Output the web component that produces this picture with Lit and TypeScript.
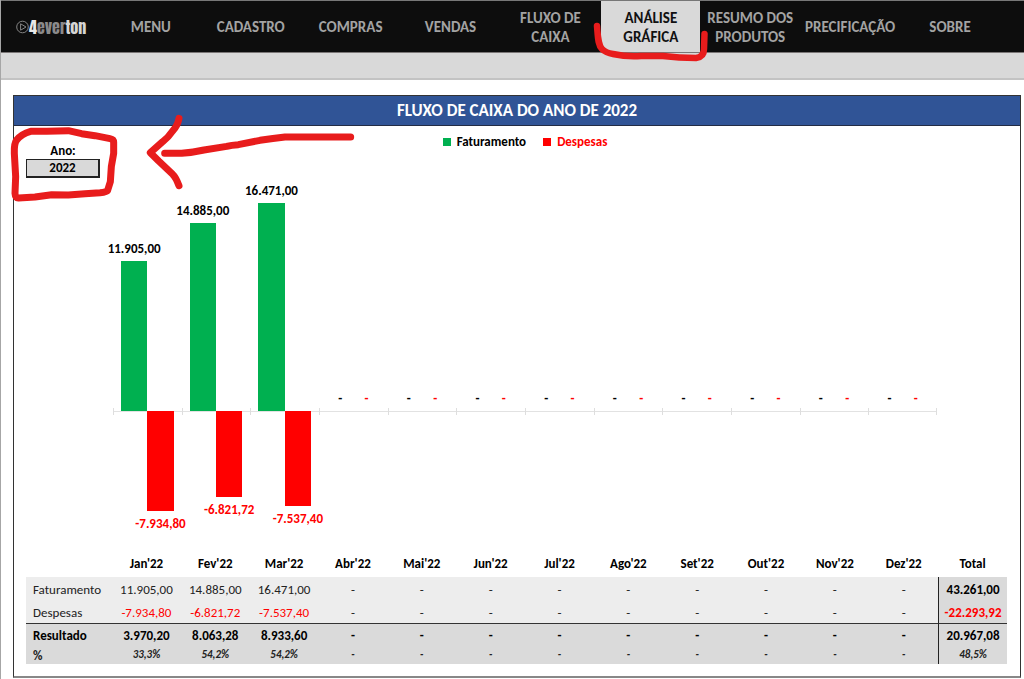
import { LitElement, html, css } from "lit";
import { customElement, property, state } from "lit/decorators.js";
import { classMap } from "lit/directives/class-map.js";
import { styleMap } from "lit/directives/style-map.js";

interface Month {
  name: string;
  income: number;
  expense: number;
}

const MONTHS: Month[] = [
  { name: "Jan", income: 11905, expense: -7934.8 },
  { name: "Fev", income: 14885, expense: -6821.72 },
  { name: "Mar", income: 16471, expense: -7537.4 },
  ...["Abr", "Mai", "Jun", "Jul", "Ago", "Set", "Out", "Nov", "Dez"].map(
    (name) => ({ name, income: 0, expense: 0 })
  ),
];

const PIXELS_PER_UNIT = 0.0126;

const money = (value: number): string => {
  if (!value) return "-";
  const [whole, cents] = Math.abs(value).toFixed(2).split(".");
  const grouped = whole.replace(/\B(?=(\d{3})+$)/g, ".");
  return `${value < 0 ? "-" : ""}${grouped},${cents}`;
};

const percent = (part: number, total: number): string =>
  total ? `${((part / total) * 100).toFixed(1).replace(".", ",")}%` : "-";

@customElement("nav-bar")
class NavBar extends LitElement {
  static styles = css`
    :host {
      display: block;
    }
    .bar {
      display: grid;
      grid-template-columns: repeat(10, minmax(0, 1fr));
      height: 51px;
      padding-right: 24px;
      background: #0d0d0d;
      border-top: 1px solid #777;
      border-bottom: 1px solid #7b7777;
    }
    .item {
      position: relative;
      display: flex;
      align-items: center;
      justify-content: center;
      padding-top: 2px;
      color: #a3a3a3;
      font-size: 15px;
      font-weight: 700;
      line-height: 19px;
      text-align: center;
      text-decoration: none;
      white-space: pre;
    }
    .active {
      margin-left: 1px;
      background: #d9d9d9;
      color: #111;
    }
    .logo {
      display: flex;
      align-items: center;
      padding-left: 15px;
      color: #8a8a8a;
      font: 400 16px "Anton", "Liberation Sans Narrow", "Roboto Condensed",
        "DejaVu Sans Condensed", sans-serif;
      text-decoration: none;
    }
    .play {
      width: 13px;
      height: 14px;
      flex: none;
    }
    .four {
      color: #e8e8e8;
    }
    .ton {
      color: #d5d5d5;
    }
    .mark {
      position: absolute;
      left: -12px;
      top: 14px;
      width: 124px;
      height: 52px;
      overflow: visible;
      pointer-events: none;
      z-index: 2;
    }
  `;

  private items = [
    "MENU",
    "CADASTRO",
    "COMPRAS",
    "VENDAS",
    "FLUXO DE\nCAIXA",
    "ANÁLISE\nGRÁFICA",
    "RESUMO DOS\nPRODUTOS",
    "PRECIFICAÇÃO",
    "SOBRE",
  ];

  @property() current = "ANÁLISE\nGRÁFICA";

  render() {
    return html`<nav class="bar">
      <a class="logo" href="#">
        <svg class="play" viewBox="0 0 13 14" fill="none" stroke="#858585">
          <circle cx="6.5" cy="7" r="5.8" />
          <path d="M4.6 3.8 10 7 4.6 10.2z" stroke-linejoin="round" />
        </svg>
        <span><span class="four">4</span>ever<span class="ton">ton</span></span>
      </a>
      ${this.items.map((label) => {
        const active = label === this.current;
        return html`<a class=${classMap({ item: true, active })} href="#"
          >${label}${active
            ? html`<svg class="mark" viewBox="0 0 124 52">
                <path
                  d="M8 11C9 23 9 30 13 34Q17 38 24 39Q38 42 52 41L74 41Q90 43 107 43Q115 42 115 34L115.500 19"
                  fill="none"
                  stroke="#e81c1c"
                  stroke-width="6.500"
                  stroke-linecap="round"
                  stroke-linejoin="round"
                />
              </svg>`
            : ""}</a
        >`;
      })}
    </nav>`;
  }
}

@customElement("cash-chart")
class CashChart extends LitElement {
  static styles = css`
    :host {
      display: block;
    }
    .plot {
      display: grid;
      grid-template-columns: repeat(12, minmax(0, 1fr));
      padding: 0 83px 0 99px;
    }
    .month {
      display: grid;
      grid-template-columns: 1fr 1fr;
      grid-template-rows: 230px 141px;
      padding: 0 8px;
      background:
        linear-gradient(#dedede, #dedede) 0 227px / 1px 7px no-repeat,
        linear-gradient(#e2e2e2, #e2e2e2) 0 230px / 100% 1px no-repeat;
    }
    .month:last-child {
      background:
        linear-gradient(#dedede, #dedede) 0 227px / 1px 7px no-repeat,
        linear-gradient(#dedede, #dedede) 100% 227px / 1px 7px no-repeat,
        linear-gradient(#e2e2e2, #e2e2e2) 0 230px / 100% 1px no-repeat;
    }
    .slot {
      display: flex;
      flex-direction: column;
      align-items: center;
      min-width: 0;
      font-size: 13px;
      font-weight: 700;
      line-height: 16px;
      white-space: nowrap;
      gap: 4px;
    }
    .up {
      grid-row: 1;
      justify-content: flex-end;
    }
    .down {
      grid-row: 2;
      grid-column: 2;
      justify-content: flex-start;
      gap: 5px;
    }
    .bar {
      width: 100%;
      flex: none;
    }
    .income {
      background: #00b050;
    }
    .expense {
      background: #f00;
    }
    .red {
      color: #f00;
    }
  `;

  @property({ attribute: false }) months: Month[] = [];

  private size(value: number) {
    return styleMap({ height: `${Math.round(Math.abs(value) * PIXELS_PER_UNIT)}px` });
  }

  render() {
    return html`<div class="plot">
      ${this.months.map(
        (m) => html`<div class="month">
          <div class="slot up">
            <span>${money(m.income)}</span>
            <div class="bar income" style=${this.size(m.income)}></div>
          </div>
          <div class=${classMap({ slot: true, red: true, up: !m.expense, down: !!m.expense })}>
            ${m.expense
              ? html`<div class="bar expense" style=${this.size(m.expense)}></div>
                  <span>${money(m.expense)}</span>`
              : html`<span>-</span>
                  <div class="bar"></div>`}
          </div>
        </div>`
      )}
    </div>`;
  }
}

@customElement("cash-table")
class CashTable extends LitElement {
  static styles = css`
    :host {
      display: block;
      padding: 0 13px 12px 12px;
    }
    .grid {
      width: 100%;
      table-layout: fixed;
      border-collapse: separate;
      border-spacing: 0;
      font-size: 13px;
      line-height: 16px;
      text-align: center;
      color: #222;
    }
    .names {
      width: 86px;
    }
    .grid th,
    .grid td {
      padding: 0;
      height: 23px;
      white-space: nowrap;
      box-sizing: border-box;
    }
    .grid thead th {
      height: 25px;
      color: #000;
      padding-bottom: 2px;
    }
    .grid tbody th {
      text-align: left;
      font-weight: 400;
      padding-left: 7px;
    }
    .light {
      background: #ededed;
    }
    .dark,
    .grid .total {
      background: #dadada;
    }
    .grid .total {
      border-left: 1px solid #222;
      font-weight: 700;
      color: #000;
    }
    .grid .first > * {
      height: 24px;
      padding-top: 2px;
    }
    .grid .ruled > * {
      border-bottom: 1px solid #333;
      padding-top: 2px;
    }
    .grid .red {
      color: #f00;
    }
    .grid .strong > * {
      font-weight: 700;
      color: #000;
    }
    .grid .rate > * {
      height: 17px;
      font-weight: 700;
    }
    .grid .rate td {
      font-size: 11px;
      line-height: 14px;
      padding-bottom: 2px;
      font-style: italic;
      color: #222;
    }
  `;

  @property({ attribute: false }) months: Month[] = [];
  @property() year = "2022";

  render() {
    const income = this.months.reduce((s, m) => s + m.income, 0);
    const expense = this.months.reduce((s, m) => s + m.expense, 0);
    const red = (v: number) => (v ? "red" : "");
    return html`<table class="grid">
      <colgroup>
        <col class="names" />
        <col span="13" />
      </colgroup>
      <thead>
        <tr>
          <td></td>
          ${this.months.map((m) => html`<th scope="col">${m.name}'${this.year.slice(2)}</th>`)}
          <th scope="col">Total</th>
        </tr>
      </thead>
      <tbody>
        <tr class="light first">
          <th scope="row">Faturamento</th>
          ${this.months.map((m) => html`<td>${money(m.income)}</td>`)}
          <td class="total">${money(income)}</td>
        </tr>
        <tr class="light ruled">
          <th scope="row">Despesas</th>
          ${this.months.map((m) => html`<td class=${red(m.expense)}>${money(m.expense)}</td>`)}
          <td class="total red">${money(expense)}</td>
        </tr>
        <tr class="dark strong">
          <th scope="row">Resultado</th>
          ${this.months.map((m) => html`<td>${money(m.income + m.expense)}</td>`)}
          <td class="total">${money(income + expense)}</td>
        </tr>
        <tr class="dark rate">
          <th scope="row">%</th>
          ${this.months.map((m) => html`<td>${percent(m.income + m.expense, m.income)}</td>`)}
          <td class="total">${percent(income + expense, income)}</td>
        </tr>
      </tbody>
    </table>`;
  }
}

@customElement("app-root")
class AppRoot extends LitElement {
  static styles = css`
    :host {
      display: block;
      box-sizing: border-box;
      min-height: 100vh;
      border-left: 1px solid #a6a6a6;
      background: #fff;
      color: #000;
      font-family: "Carlito", "Lato", sans-serif;
    }
    .strip {
      height: 25px;
      background: #d9d9d9;
      border-bottom: 2px solid #c3c3c3;
    }
    .page {
      padding: 15px 3px 1px 12px;
    }
    .card {
      position: relative;
      border: 1px solid #333;
      border-bottom: 2px solid #888;
    }
    .title {
      margin: 0;
      padding: 4px 0;
      background: #305496;
      border-bottom: 1px solid #222c44;
      color: #fff;
      font-size: 17px;
      font-weight: 700;
      line-height: 21px;
      text-align: center;
    }
    .tools {
      display: grid;
      grid-template-columns: 99px 1fr;
      height: 55px;
      padding-right: 83px;
      font-size: 13px;
      font-weight: 700;
      line-height: 16px;
    }
    .year {
      display: flex;
      flex-direction: column;
      width: 74px;
      padding: 17px 0 0 12px;
      text-align: center;
    }
    .select {
      appearance: none;
      height: 19px;
      padding: 0;
      border: 1px solid #222;
      border-right-width: 2px;
      border-bottom-width: 2px;
      border-radius: 0;
      background: #d9d9d9;
      color: #000;
      font: inherit;
      text-align: center;
      text-align-last: center;
    }
    .legend {
      display: flex;
      justify-content: center;
      align-items: flex-start;
      gap: 17px;
      padding-top: 8px;
    }
    .entry {
      display: flex;
      align-items: center;
      gap: 6px;
    }
    .entry::before {
      content: "";
      width: 8px;
      height: 8px;
      background: #00b050;
    }
    .out {
      color: #f00;
    }
    .out::before {
      background: #f00;
    }
    .notes {
      position: absolute;
      left: -14px;
      top: -11px;
      width: 360px;
      height: 130px;
      pointer-events: none;
    }
  `;

  @state() private year = "2022";

  render() {
    return html`
      <nav-bar></nav-bar>
      <div class="strip"></div>
      <main class="page">
        <section class="card">
          <h1 class="title">FLUXO DE CAIXA DO ANO DE ${this.year}</h1>
          <div class="tools">
            <div class="year">
              <label for="year">Ano:</label>
              <select class="select" id="year">
                <option selected>2022</option>
              </select>
            </div>
            <div class="legend">
              <span class="entry">Faturamento</span>
              <span class="entry out">Despesas</span>
            </div>
          </div>
          <cash-chart .months=${MONTHS}></cash-chart>
          <cash-table .months=${MONTHS} .year=${this.year}></cash-table>
          <svg
            class="notes"
            viewBox="0 0 1080 390"
            fill="none"
            stroke="#e81c1c"
            stroke-width="21"
            stroke-linecap="round"
            stroke-linejoin="round"
          >
            <path
              d="M140 139L92 139Q64 147 50 165Q42 175 43 205L47 275L45 325Q46 340 56 339L105 336L155 329L205 330L255 326L300 323Q320 321 323 316L331 290L334 245L341 205L341 172Q341 163 330 161L285 152L245 146L205 137L140 139"
            />
            <path d="M537 100Q533 122 517 139Q505 157 488 170L451 203L476 228L518 268Q527 276 537 302" />
            <path d="M494 205L545 205Q580 202 612 195L680 184Q694 180 715 179L780 166Q820 160 855 156L1052 156" />
          </svg>
        </section>
      </main>
    `;
  }
}
